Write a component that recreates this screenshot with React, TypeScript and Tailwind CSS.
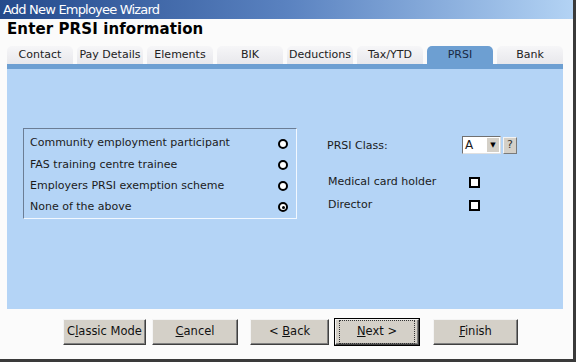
import React from "react";

const tabs = ["Contact", "Pay Details", "Elements", "BIK", "Deductions", "Tax/YTD", "PRSI", "Bank"];

const options = [
  { label: "Community employment participant", checked: false },
  { label: "FAS training centre trainee", checked: false },
  { label: "Employers PRSI exemption scheme", checked: false },
  { label: "None of the above", checked: true },
];

function Radio({ checked }: { checked: boolean }) {
  return (
    <span className="flex h-[10px] w-[10px] items-center justify-center rounded-full border-[2px] border-black bg-white">
      {checked && <span className="h-[3px] w-[3px] rounded-full bg-black" />}
    </span>
  );
}

function Check() {
  return <span className="block h-[11px] w-[11px] border-[2px] border-black bg-white" />;
}

function Btn({ children, focused }: { children: React.ReactNode; focused?: boolean }) {
  return (
    <button
      className={
        "flex h-[26px] w-full items-center justify-center bg-[#d4d0c8] text-[11.5px] text-[#111] border border-t-[#f4f4f4] border-l-[#f4f4f4] border-r-[#404040] border-b-[#404040] shadow-[inset_-1px_-1px_0_#808080] " +
        (focused ? "outline outline-1 outline-black" : "")
      }
    >
      {focused ? (
        <span className="block w-[76px] border border-dotted border-[#333] py-[2px]">{children}</span>
      ) : (
        children
      )}
    </button>
  );
}

export default function App() {
  return (
    <div className="h-[362px] w-[576px] overflow-hidden bg-[#fbfbfb] font-['DejaVu_Sans',sans-serif] border-r-[3px] border-b-[3px] border-r-[#3a3a3a] border-b-[#3a3a3a]">
      <div className="flex h-[19px] items-center bg-gradient-to-r from-[#244a8c] via-[#5a82c0] to-[#b3d3f4] pl-[3px] text-[13px] tracking-[-0.8px] text-white">
        Add New Employee Wizard
      </div>
      <div className="pl-[7px] pt-[1px] text-[15px] font-bold leading-[18px] tracking-[0.1px] text-black">
        Enter PRSI information
      </div>

      <div className="ml-[7px] mt-[8px] flex w-[556px] gap-[4px]">
        {tabs.map((t) => (
          <div
            key={t}
            className={
              "flex h-[18px] w-[66px] items-center justify-center rounded-t-[5px] text-[11px] " +
              (t === "PRSI"
                ? "bg-[#6d9fd2] text-[#1a2a44]"
                : "bg-gradient-to-b from-[#f6f6f8] to-[#e8e8ec] text-[#222]")
            }
          >
            {t}
          </div>
        ))}
      </div>

      <div className="ml-[7px] h-[245px] w-[556px] border-t-[5px] border-[#6d9fd2] bg-[#b4d4f6]">
        <div className="ml-[16px] mt-[59px] flex text-[11px] text-[#1b1b1b]">
          <div className="flex h-[91px] w-[274px] flex-col border border-t-[#6b7d95] border-l-[#6b7d95] border-r-[#f2f8ff] border-b-[#f2f8ff] pl-[6px] pr-[8px] pt-[4px]">
            {options.map((o) => (
              <div key={o.label} className="flex h-[21.3px] items-center justify-between">
                <span>{o.label}</span>
                <Radio checked={o.checked} />
              </div>
            ))}
          </div>

          <div className="ml-[30px] flex flex-col">
            <div className="mt-[8px] flex items-center">
              <span className="w-[135px] pt-[2px]">PRSI Class:</span>
              <div className="flex h-[18px] w-[39px] items-center border border-t-[#707070] border-l-[#707070] border-r-[#e0e0e0] border-b-[#e0e0e0] bg-white">
                <span className="flex-1 pl-[2px] text-[12px]">A</span>
                <span className="mr-[1px] flex h-[14px] w-[12px] items-center justify-center bg-[#d4d0c8] text-[7px] text-black">▼</span>
              </div>
              <span className="ml-[2px] flex h-[17px] w-[14px] items-center justify-center border border-t-[#f4f4f4] border-l-[#f4f4f4] border-r-[#7a7a7a] border-b-[#7a7a7a] bg-[#d4d0c8] text-[11px] text-[#333]">
                ?
              </span>
            </div>
            <div className="mt-[18px] flex h-[20px] items-center pl-[1px]">
              <span className="w-[141px]">Medical card holder</span>
              <Check />
            </div>
            <div className="mt-[3px] flex h-[20px] items-center pl-[1px]">
              <span className="w-[141px]">Director</span>
              <Check />
            </div>
          </div>
        </div>
      </div>

      <div className="mt-[10px] flex">
        <div className="ml-[63px] w-[83px]"><Btn><span>C<u>l</u>assic Mode</span></Btn></div>
        <div className="ml-[6px] w-[86px]"><Btn><span><u>C</u>ancel</span></Btn></div>
        <div className="ml-[12px] w-[79px]"><Btn><span>&lt; <u>B</u>ack</span></Btn></div>
        <div className="ml-[6px] w-[84px]"><Btn focused><span><u>N</u>ext &gt;</span></Btn></div>
        <div className="ml-[14px] w-[85px]"><Btn><span><u>F</u>inish</span></Btn></div>
      </div>
    </div>
  );
}
